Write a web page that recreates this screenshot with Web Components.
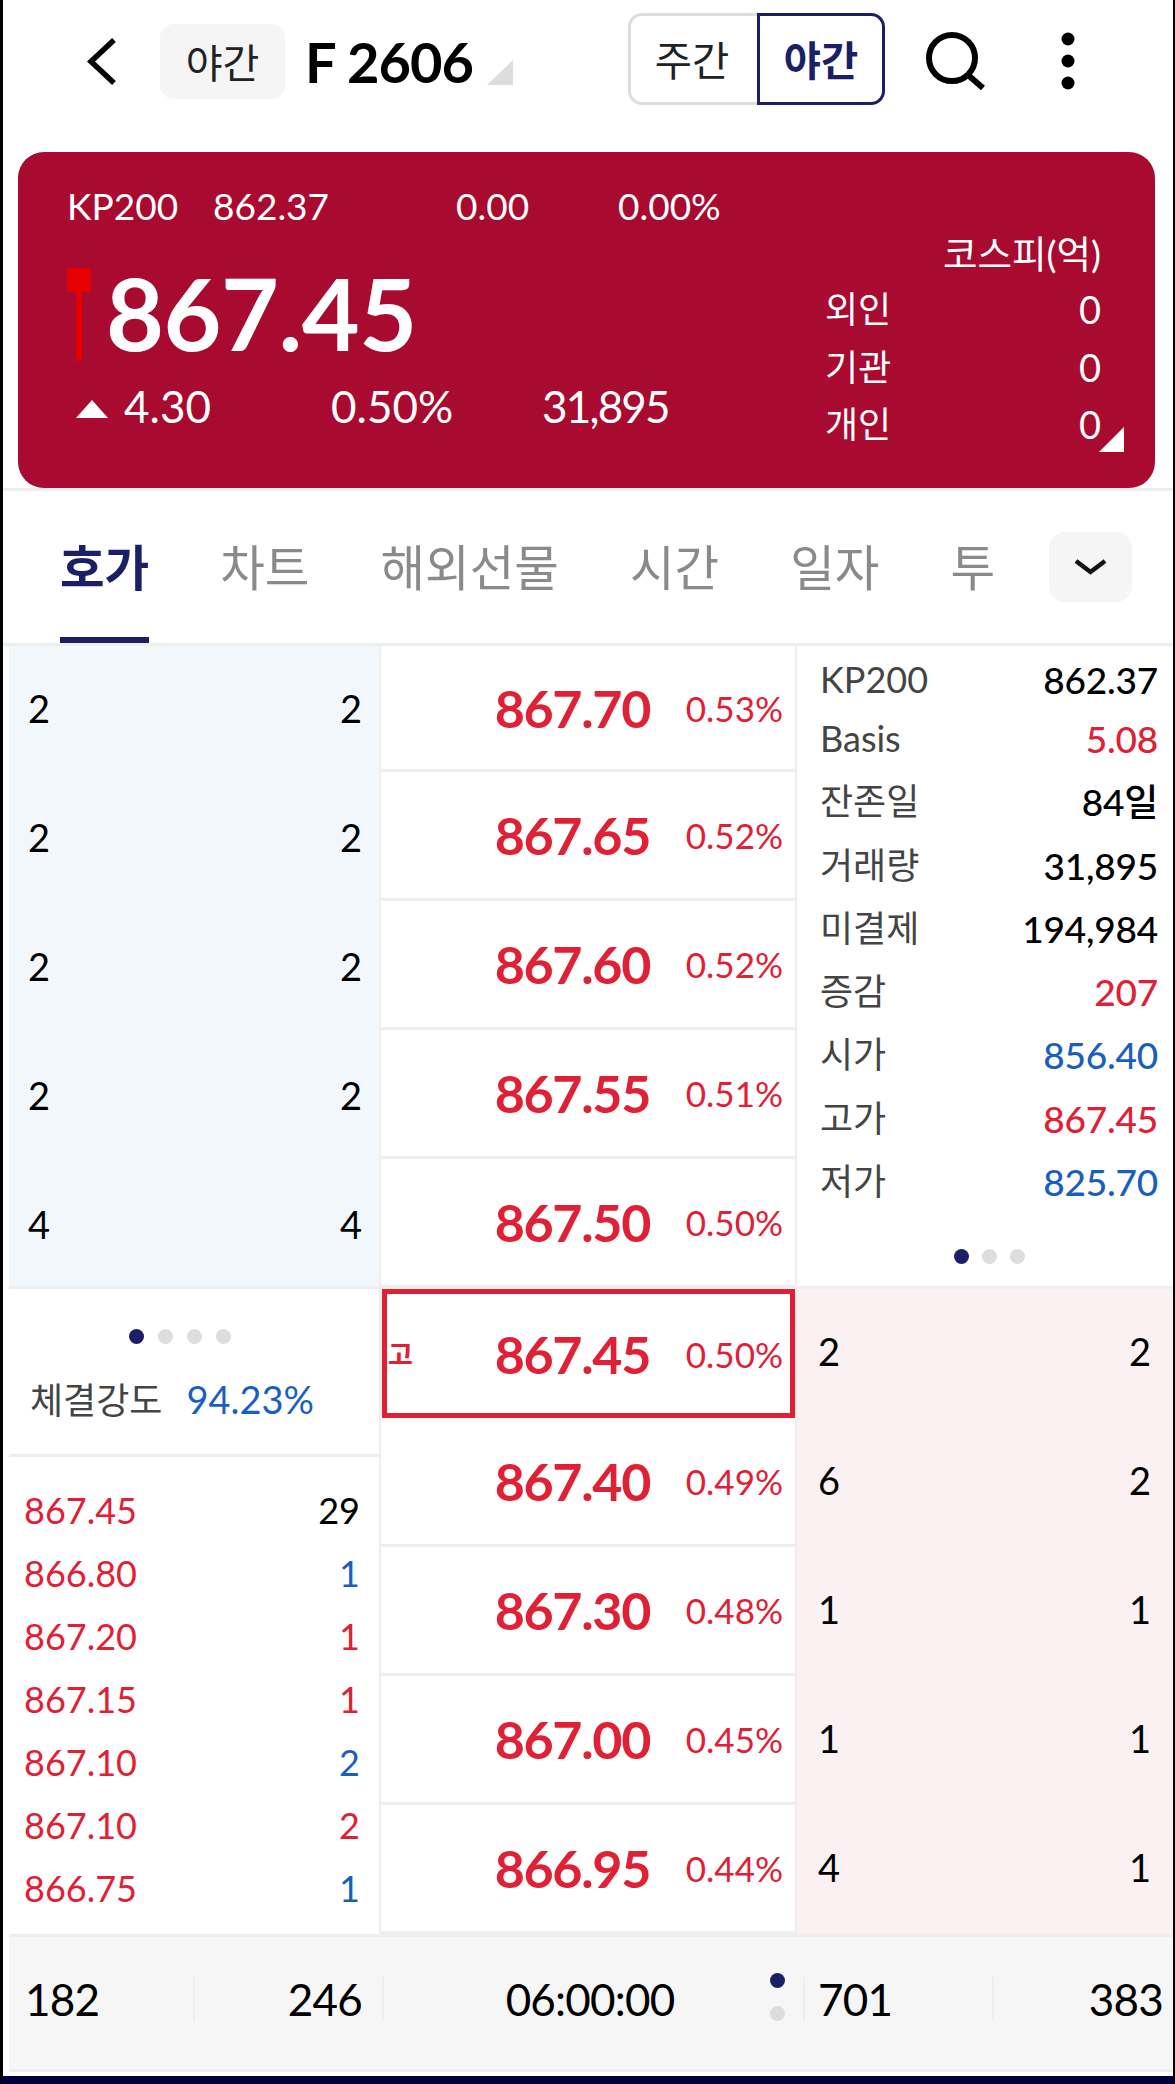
<!DOCTYPE html>
<html lang="ko">
<head>
<meta charset="utf-8">
<title>F 2606</title>
<style>
  html, body { margin: 0; padding: 0; background: #fff; }
  body { font-family: Lato, "Noto Sans CJK KR", sans-serif; color: #000; }
</style>
</head>
<body>
<hoga-app></hoga-app>

<script>
// 공통 폰트
const FONT = `Lato, "Noto Sans CJK KR", sans-serif`;
const RED = '#df2035';
const BLUE = '#1a5fbf';
const NAVY = '#1b1f66';

class AppHeader extends HTMLElement {
  constructor() {
    super();
    this.attachShadow({ mode: 'open' });
    this.shadowRoot.innerHTML = /* html */`
      <style>
        :host { display: flex; align-items: center; height: 116px; padding: 6px 0 0 80px; box-sizing: border-box; font-family: ${FONT}; }
        .back { width: 38px; height: 50px; margin-right: 39px; flex: none; }
        .badge { width: 125px; height: 75px; background: #f5f5f5; border-radius: 14px; display: flex; align-items: center; justify-content: center; font-size: 40px; color: #222; flex: none; }
        .code { font-size: 56px; letter-spacing: -1px; font-weight: 700; margin-left: 20px; width: 182px; white-space: nowrap; flex: none; }
        .tri { width: 0; height: 0; border-left: 26px solid transparent; border-bottom: 25px solid #ddd; align-self: flex-end; margin-bottom: 31px; flex: none; }
        .toggle { display: flex; height: 92px; margin-left: 115px; margin-top: -5px; flex: none; font-size: 40.500px; }
        .toggle div { display: flex; align-items: center; justify-content: center; box-sizing: border-box; }
        .day { width: 129px; border: 3px solid #ddd; border-right: 0; border-radius: 14px 0 0 14px; color: #222; padding-right: 4px; }
        .night { width: 128px; border: 3px solid ${NAVY}; border-radius: 0 14px 14px 0; color: ${NAVY}; font-weight: 700; }
        .search { width: 60px; height: 58px; margin-left: 41px; margin-top: -1px; flex: none; }
        .more { width: 16px; height: 58px; margin-left: 74px; flex: none; }
      </style>
      <svg class="back" viewBox="0 0 38 50"><path d="M31 4 8 25.500 31 47" fill="none" stroke="#000" stroke-width="5.500"/></svg>
      <div class="badge">야간</div>
      <div class="code">F 2606</div>
      <div class="tri"></div>
      <div class="toggle"><div class="day">주간</div><div class="night">야간</div></div>
      <svg class="search" viewBox="0 0 60 58"><circle cx="26" cy="26" r="23" fill="none" stroke="#000" stroke-width="6"/><path d="M42 43 57 56" stroke="#000" stroke-width="6" fill="none"/></svg>
      <svg class="more" viewBox="0 0 16 58"><circle cx="8" cy="7" r="6.500"/><circle cx="8" cy="29" r="6.500"/><circle cx="8" cy="51" r="6.500"/></svg>
    `;
  }
}

class QuoteCard extends HTMLElement {
  constructor() {
    super();
    this.attachShadow({ mode: 'open' });
    this.shadowRoot.innerHTML = /* html */`
      <style>
        :host { display: block; border-bottom: 3px solid #eee; font-family: ${FONT}; }
        .card { margin: 36px 18px 0 15px; height: 336px; box-sizing: border-box; background: #a80a30; border-radius: 26px; color: #fff; display: flex; position: relative; padding: 0 0 0 49px; }
        .left { width: 758px; flex: none; }
        .top { display: flex; font-size: 37px; height: 30px; line-height: 30px; margin-top: 39px; }
        .top span:nth-child(1) { width: 146px; }
        .top span:nth-child(2) { width: 243px; }
        .top span:nth-child(3) { width: 162px; }
        .main { display: flex; align-items: center; height: 106px; margin-top: 41px; }
        .candle { width: 24px; height: 94px; position: relative; flex: none; margin-right: 15px; }
        .candle::before { content: ''; position: absolute; left: 0; top: 0; width: 24px; height: 24px; background: #e60000; }
        .candle::after { content: ''; position: absolute; left: 9px; top: 24px; width: 6px; height: 69px; background: #e60000; }
        .price { font-size: 100px; letter-spacing: -0.500px; font-weight: 700; line-height: 106px; margin-top: -6px; }
        .bottom { display: flex; align-items: center; font-size: 44px; height: 40px; margin-top: 18px; }
        .up { width: 0; height: 0; border: 16px solid transparent; border-top: 0; border-bottom: 18px solid #fff; margin: 6px 16px 0 9px; flex: none; }
        .bottom .chg { width: 207px; }
        .bottom .pct { width: 211px; }
        .bottom .vol { letter-spacing: -1.800px; }
        .right { flex: 1; padding-right: 54px; padding-top: 83px; font-size: 36px; }
        .title { text-align: right; line-height: 38px; height: 38px; font-size: 37.500px; margin-bottom: 8px; }
        .row { display: flex; justify-content: space-between; height: 57.500px; line-height: 57.500px; }
        .row span:last-child { font-size: 38px; }
        .corner { position: absolute; right: 31px; bottom: 36px; width: 0; height: 0; border-left: 25px solid transparent; border-bottom: 25px solid #fff; }
      </style>
      <div class="card">
        <div class="left">
          <div class="top"><span>KP200</span><span>862.37</span><span>0.00</span><span>0.00%</span></div>
          <div class="main"><div class="candle"></div><div class="price">867.45</div></div>
          <div class="bottom"><i class="up"></i><span class="chg">4.30</span><span class="pct">0.50%</span><span class="vol">31,895</span></div>
        </div>
        <div class="right">
          <div class="title">코스피(억)</div>
          <div class="row"><span>외인</span><span>0</span></div>
          <div class="row"><span>기관</span><span>0</span></div>
          <div class="row"><span>개인</span><span>0</span></div>
        </div>
        <div class="corner"></div>
      </div>
    `;
  }
}

class TabBar extends HTMLElement {
  constructor() {
    super();
    this.attachShadow({ mode: 'open' });
    this.shadowRoot.innerHTML = /* html */`
      <style>
        :host { display: flex; height: 152px; align-items: stretch; position: relative; font-family: ${FONT}; border-bottom: 3px solid #eee; box-sizing: content-box; }
        .tabs { display: flex; gap: 71px; padding-left: 57px; width: 1000px; box-sizing: border-box; font-size: 48.500px; color: #8a8a8a; flex: none; }
        .tab { height: 152px; line-height: 153px; box-sizing: border-box; white-space: nowrap; flex: none; }
        .tab.on { color: ${NAVY}; font-weight: 700; border-bottom: 6px solid ${NAVY}; }
        .more { position: absolute; left: 1046px; top: 41px; width: 83px; height: 70px; background: #f5f5f5; border-radius: 16px; display: flex; align-items: center; justify-content: center; }
        svg { width: 33px; height: 18px; }
      </style>
      <div class="tabs">
        <div class="tab on">호가</div><div class="tab">차트</div><div class="tab">해외선물</div><div class="tab">시간</div><div class="tab">일자</div><div class="tab">투</div>
      </div>
      <div class="more"><svg viewBox="0 0 33 18"><path d="M2 3l14.500 11L31 3" fill="none" stroke="#111" stroke-width="4.500"/></svg></div>
    `;
  }
}

// 호가 가격 한 줄
class PriceRow extends HTMLElement {
  constructor() {
    super();
    this.attachShadow({ mode: 'open' });
    this.shadowRoot.innerHTML = /* html */`
      <style>
        :host { display: flex; align-items: center; justify-content: flex-end; background: #fff; box-sizing: border-box; padding-right: 12px; height: 126px; color: ${RED}; font-family: ${FONT}; position: relative; flex: none; }
        :host([first]) { height: 123px; }
        :host([cur]) { height: 129px; border: 5px solid ${RED}; padding-right: 7px; margin-left: 1px; margin-bottom: -3px; z-index: 1; }
        .p { font-size: 52px; letter-spacing: -1.300px; font-weight: 700; }
        .r { font-size: 35px; width: 133px; text-align: right; }
        .k { position: absolute; left: 1px; font-size: 27px; font-weight: 700; }
      </style>
      <span class="k"></span><span class="p"></span><span class="r"></span>
    `;
  }
  connectedCallback() {
    const s = this.shadowRoot;
    s.querySelector('.p').textContent = this.getAttribute('p');
    s.querySelector('.r').textContent = this.getAttribute('r');
    s.querySelector('.k').textContent = this.getAttribute('k') ?? '';
  }
}

// 잔량 두 칸 한 줄
class QtyRow extends HTMLElement {
  constructor() {
    super();
    this.attachShadow({ mode: 'open' });
    this.shadowRoot.innerHTML = /* html */`
      <style>
        :host { display: flex; justify-content: space-between; align-items: center; height: 129px; font-size: 38px; font-family: ${FONT}; flex: none; }
      </style>
      <span class="a"></span><span class="b"></span>
    `;
  }
  connectedCallback() {
    this.shadowRoot.querySelector('.a').textContent = this.getAttribute('a');
    this.shadowRoot.querySelector('.b').textContent = this.getAttribute('b');
  }
}

class PageDots extends HTMLElement {
  constructor() {
    super();
    this.attachShadow({ mode: 'open' });
  }
  connectedCallback() {
    const n = +this.getAttribute('n');
    let html = `<style>
      :host { display: flex; flex-direction: ${this.hasAttribute('col') ? 'column' : 'row'}; gap: ${this.getAttribute('gap') || 15}px; }
      i { width: 15px; height: 15px; border-radius: 50%; background: #ddd; display: block; }
      i:first-of-type { background: ${NAVY}; }
    </style>`;
    for (let i = 0; i < n; i++) html += '<i></i>';
    this.shadowRoot.innerHTML = html;
  }
}

class OrderBook extends HTMLElement {
  constructor() {
    super();
    this.attachShadow({ mode: 'open' });
    const asks = [['867.70','0.53%'],['867.65','0.52%'],['867.60','0.52%'],['867.55','0.51%'],['867.50','0.50%']];
    const bids = [['867.40','0.49%'],['867.30','0.48%'],['867.00','0.45%'],['866.95','0.44%']];
    const info = [
      ['KP200','862.37','#000'],['Basis','5.08',RED],['잔존일','84일','#000'],['거래량','31,895','#000'],
      ['미결제','194,984','#000'],['증감','207',RED],['시가','856.40',BLUE],['고가','867.45',RED],['저가','825.70',BLUE]
    ];
    const ticks = [['867.45','29','#000'],['866.80','1',BLUE],['867.20','1',RED],['867.15','1',RED],['867.10','2',BLUE],['867.10','2',RED],['866.75','1',BLUE]];
    const askQty = [[2,2],[2,2],[2,2],[2,2],[4,4]];
    const bidQty = [[2,2],[6,2],[1,1],[1,1],[4,1]];
    this.shadowRoot.innerHTML = /* html */`
      <style>
        :host { display: grid; grid-template-columns: 370px 414px 1fr; column-gap: 2px; margin-left: 6px; padding-bottom: 3px; background: #eee; font-family: ${FONT}; }
        .sec { display: flex; flex-direction: column; }
        .ask { background: #f2f7fc; padding: 0 17px 0 19px; height: 640px; overflow: hidden; margin-bottom: 3px; }
        .ask qty-row { position: relative; top: -3px; }
        .bid { background: #fbf1f2; padding: 0 22px 0 21px; height: 645px; }
        .bid qty-row { position: relative; top: -3px; }
        .mid { gap: 3px; }
        .mid.t { height: 640px; }
        .info { background: #fff; height: 640px; padding: 0 15px 0 23px; box-sizing: border-box; font-size: 36px; }
        .ir { display: flex; justify-content: space-between; height: 63.300px; line-height: 63.300px; flex: none; }
        .ir span:first-child { color: #444; }
        .ir span:last-child { font-size: 37px; font-weight: 500; letter-spacing: -0.200px; }
        .ir:first-child { margin-top: 2px; height: 59px; line-height: 63.300px; }
        .info page-dots { align-self: center; margin-top: 36px; }
        .left-b { background: #fff; height: 645px; }
        .str { height: 165px; border-bottom: 3px solid #eee; display: flex; flex-direction: column; align-items: center; flex: none; }
        .str page-dots { margin-top: 40px; margin-right: 28px; }
        .str div { font-size: 36px; color: #444; margin-top: 28px; align-self: flex-start; margin-left: 21px; white-space: nowrap; }
        .str b { font-weight: 400; color: ${BLUE}; font-size: 38px; margin-left: 24px; }
        .ticks { padding: 22px 19px 0 15px; flex: 1; }
        .tk { display: flex; justify-content: space-between; height: 63px; line-height: 63px; font-size: 36px; color: ${RED}; }
      </style>
      <div class="sec ask">${askQty.map(q => `<qty-row a="${q[0]}" b="${q[1]}"></qty-row>`).join('')}</div>
      <div class="sec mid t">${asks.map((a, i) => `<price-row ${i ? '' : 'first'} p="${a[0]}" r="${a[1]}"></price-row>`).join('')}</div>
      <div class="sec info">
        ${info.map(r => `<div class="ir"><span>${r[0]}</span><span style="color:${r[2]}">${r[1]}</span></div>`).join('')}
        <page-dots n="3" gap="13"></page-dots>
      </div>
      <div class="sec left-b">
        <div class="str"><page-dots n="4" gap="14"></page-dots><div>체결강도<b>94.23%</b></div></div>
        <div class="ticks">${ticks.map(t => `<div class="tk"><span>${t[0]}</span><span style="color:${t[2]}">${t[1]}</span></div>`).join('')}</div>
      </div>
      <div class="sec mid b">
        <price-row cur k="고" p="867.45" r="0.50%"></price-row>
        ${bids.map(a => `<price-row p="${a[0]}" r="${a[1]}"></price-row>`).join('')}
      </div>
      <div class="sec bid">${bidQty.map(q => `<qty-row a="${q[0]}" b="${q[1]}"></qty-row>`).join('')}</div>
    `;
  }
}

class BookFooter extends HTMLElement {
  constructor() {
    super();
    this.attachShadow({ mode: 'open' });
    this.shadowRoot.innerHTML = /* html */`
      <style>
        :host { display: grid; grid-template-columns: 184px 189px 421px 189px 1fr; align-items: center; height: 135px; padding-bottom: 8px; box-sizing: border-box; margin-left: 6px; background: #f6f6f6; border-bottom: 3px solid #eee; font-size: 44px; letter-spacing: -0.800px; font-family: ${FONT}; position: relative; }
        div { height: 44px; line-height: 44px; display: flex; align-items: center; }
        div + div { border-left: 2px solid #eee; }
        .l { padding-left: 16px; }
        .l:nth-of-type(4) { padding-left: 13px; }
        .r { justify-content: flex-end; padding-right: 20px; }
        .r:last-of-type { padding-right: 10px; }
        .c { justify-content: center; padding-right: 7px; position: relative; box-sizing: border-box; }
        page-dots { position: absolute; right: 18px; top: -4px; }
      </style>
      <div class="l">182</div>
      <div class="r">246</div>
      <div class="c">06:00:00<page-dots n="2" col gap="18"></page-dots></div>
      <div class="l">701</div>
      <div class="r">383</div>
    `;
  }
}

class HogaApp extends HTMLElement {
  constructor() {
    super();
    this.attachShadow({ mode: 'open' });
    this.shadowRoot.innerHTML = /* html */`
      <style>
        :host { display: flex; flex-direction: column; width: 1175px; height: 2084px; box-sizing: border-box; border-left: 3px solid #000; border-right: 2px solid #000; border-bottom: 8px solid #00003a; background: #fff; overflow: hidden; }
      </style>
      <app-header></app-header>
      <quote-card></quote-card>
      <tab-bar></tab-bar>
      <order-book></order-book>
      <book-footer></book-footer>
    `;
  }
}

customElements.define('app-header', AppHeader);
customElements.define('quote-card', QuoteCard);
customElements.define('tab-bar', TabBar);
customElements.define('price-row', PriceRow);
customElements.define('qty-row', QtyRow);
customElements.define('page-dots', PageDots);
customElements.define('order-book', OrderBook);
customElements.define('book-footer', BookFooter);
customElements.define('hoga-app', HogaApp);
</script>
</body>
</html>
